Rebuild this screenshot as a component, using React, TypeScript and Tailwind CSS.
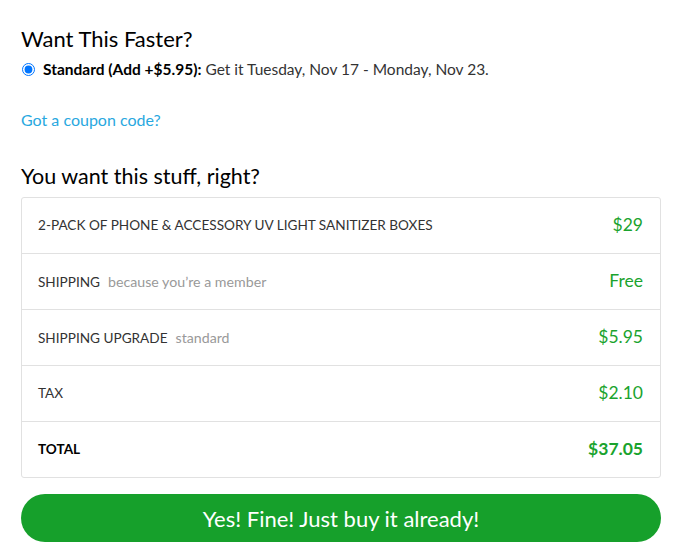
import React from "react";

const rows = [
  { label: "2-PACK OF PHONE & ACCESSORY UV LIGHT SANITIZER BOXES", note: "", price: "$29" },
  { label: "SHIPPING", note: "because you’re a member", price: "Free" },
  { label: "SHIPPING UPGRADE", note: "standard", price: "$5.95" },
  { label: "TAX", note: "", price: "$2.10" },
];

export default function App() {
  return (
    <div className="w-[688px] h-[551px] bg-white pl-[21px] pr-[27px] pt-[27px] text-[#222]" style={{ fontFamily: "Lato, 'Open Sans', sans-serif" }}>
      <h2 className="text-[22px] leading-[24px] font-normal text-black">Want This Faster?</h2>
      <label className="flex items-center mt-[9px] text-[15.5px] leading-[18px]">
        <input type="radio" defaultChecked className="w-[13px] h-[13px] m-0 ml-[1px] mr-[8px] accent-[#0075ff]" />
        <span className="font-bold text-black">Standard (Add +$5.95):</span>
        <span className="ml-[4px] text-[#333]">Get it Tuesday, Nov 17 - Monday, Nov 23.</span>
      </label>
      <a className="block mt-[33px] text-[16px] leading-[18px] text-[#29a8e0]">Got a coupon code?</a>
      <h2 className="mt-[35px] text-[21.5px] leading-[24px] font-normal text-black">You want this stuff, right?</h2>
      <div className="mt-[9px] border border-[#e1e1e1] rounded-[3px]">
        {rows.map((r, i) => (
          <div key={i} className="h-[56px] flex items-center justify-between px-[16px] pr-[17px] border-b border-[#e1e1e1]">
            <div className="flex items-baseline text-[#333]">
              <span className="text-[13.6px]">{r.label}</span>
              {r.note && <span className="ml-[8px] text-[14.2px] text-[#999]">{r.note}</span>}
            </div>
            <span className="text-[17.5px] text-[#1aa32e]">{r.price}</span>
          </div>
        ))}
        <div className="h-[55px] flex items-center justify-between px-[16px] pr-[17px]">
          <span className="text-[13.6px] font-bold text-black">TOTAL</span>
          <span className="text-[17.5px] font-bold text-[#1aa32e]">$37.05</span>
        </div>
      </div>
      <button className="mt-[16px] w-full h-[48px] rounded-full bg-[#16a02b] text-white text-[22px]">
        Yes! Fine! Just buy it already!
      </button>
    </div>
  );
}
